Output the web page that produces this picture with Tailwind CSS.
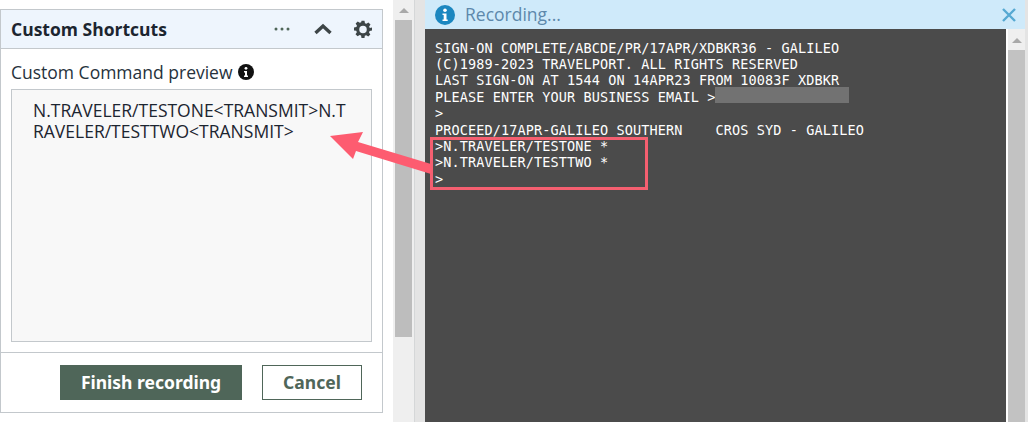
<!DOCTYPE html>
<html lang="en">
<head>
  <meta charset="UTF-8"/>
  <title>Custom Shortcuts - Recording</title>
  <script src="https://cdn.jsdelivr.net/npm/@tailwindcss/browser@4"></script>
</head>
<body class="w-[1028px] h-[422px] overflow-hidden bg-white relative font-['Open_Sans',sans-serif]">
  <div class="flex h-full">

    <!-- Left panel -->
    <div class="w-[393px] pt-[9px] shrink-0">
      <div class="w-[383px] h-[404px] border border-[#c3c8cc] flex flex-col">
        <div class="h-[39px] bg-[#eef5fd] border-b border-[#c3c8cc] flex items-center pl-[10px] pr-[10px] shrink-0">
          <span class="text-[17.500px] font-bold text-[#1c2530] flex-1">Custom Shortcuts</span>
          <svg width="16" height="4" viewBox="0 0 16 4" class="mr-[24px]"><circle cx="2" cy="2" r="1.500" fill="#4f6659"/><circle cx="8" cy="2" r="1.500" fill="#4f6659"/><circle cx="14" cy="2" r="1.500" fill="#4f6659"/></svg>
          <svg width="18" height="12" viewBox="0 0 18 12" class="mr-[22px]"><path d="M1.500 10 L9 3 L16.500 10" fill="none" stroke="#3d4547" stroke-width="3.400"/></svg>
          <svg width="18" height="18" viewBox="0 0 24 24" fill="#3d4547"><path fill-rule="evenodd" d="M10 1h4l.6 3.200 1.900.8 2.700-1.800 2.800 2.800-1.800 2.700.8 1.900L24 10v4l-3.200.6-.8 1.900 1.800 2.700-2.800 2.800-2.700-1.800-1.900.8L14 24h-4l-.6-3.200-1.900-.8-2.700 1.800-2.800-2.800 1.800-2.700-.8-1.900L0 14v-4l3.200-.6.8-1.900L2.200 4.800 5 2l2.700 1.800 1.900-.8zM12 7.500a5 5 0 1 0 0 10 5 5 0 0 0 0-10z"/></svg>
        </div>
        <div class="flex-1 flex flex-col px-[10px] min-h-0">
          <div class="flex items-center h-[20px] mt-[13px] text-[17.500px] text-[#26323c] shrink-0">
            Custom Command preview
            <svg width="16" height="16" viewBox="0 0 16 16" class="ml-[5px]"><circle cx="8" cy="8" r="8" fill="#111"/><circle cx="8" cy="4.300" r="1.400" fill="#fff"/><path d="M6 7h3v4.500h1V13H6v-1.500h1V8.500H6z" fill="#fff"/></svg>
          </div>
          <div class="mt-[7px] h-[253px] bg-[#f8f8f8] border border-[#c3c8cc] pl-[21px] pr-[18px] pt-[10px] text-[17.500px] leading-[21px] text-[#1c2530] break-all shrink-0">N.TRAVELER/TESTONE&lt;TRANSMIT&gt;N.TRAVELER/TESTTWO&lt;TRANSMIT&gt;</div>
        </div>
        <div class="h-[60px] border-t border-[#c3c8cc] flex items-center justify-end gap-[20px] pr-[20px] shrink-0 pb-[1px]">
          <button class="w-[182px] h-[35px] bg-[#4f6659] text-white text-[17.500px] font-bold font-['Noto_Sans',sans-serif]">Finish recording</button>
          <button class="w-[100px] h-[35px] bg-white border border-[#4f6659] text-[#4f6659] text-[17.500px] font-bold font-['Noto_Sans',sans-serif]">Cancel</button>
        </div>
      </div>
    </div>

    <!-- Page scrollbar -->
    <div class="w-[22px] bg-[#efefef] border-r border-[#d5d7d8] shrink-0 flex flex-col items-center pt-[8px]">
      <div class="w-0 h-0 border-l-[5px] border-r-[5px] border-b-[5px] border-l-transparent border-r-transparent border-b-[#a9a9a9]"></div>
      <div class="w-[17px] h-[317px] bg-[#bdbdbd] mt-[7px]"></div>
    </div>
    <div class="w-[10px] bg-[#e4e4e4] shrink-0"></div>

    <!-- Recording panel -->
    <div class="w-[600px] flex flex-col shrink-0">
      <div class="h-[29px] bg-[#cfeafa] flex items-center pl-[10px] pr-[9px] shrink-0">
        <svg width="20" height="20" viewBox="0 0 20 20"><circle cx="10" cy="10" r="10" fill="#1b87c0"/><circle cx="10" cy="5.200" r="1.800" fill="#fff"/><path d="M7.500 8.500h4v6h1.200V16H7.500v-1.500h1.200v-4.500H7.500z" fill="#fff"/></svg>
        <span class="ml-[10px] text-[17.500px] text-[#5d88ab] flex-1">Recording...</span>
        <svg width="14" height="14" viewBox="0 0 14 14"><path d="M1 1 L13 13 M13 1 L1 13" stroke="#56a9d2" stroke-width="2.400"/></svg>
      </div>
      <div class="flex-1 flex min-h-0">
        <div class="flex-1 bg-[#4b4b4b] pl-[10px] pt-[10.600px] text-[13.500px] leading-[16.400px] text-white font-['DejaVu_Sans_Mono',monospace] tracking-[0.12px]">
          <div class="whitespace-pre">SIGN-ON COMPLETE/ABCDE/PR/17APR/XDBKR36 - GALILEO</div>
          <div class="whitespace-pre">(C)1989-2023 TRAVELPORT. ALL RIGHTS RESERVED</div>
          <div class="whitespace-pre">LAST SIGN-ON AT 1544 ON 14APR23 FROM 10083F XDBKR</div>
          <div class="whitespace-pre flex">PLEASE ENTER YOUR BUSINESS EMAIL &gt;<span class="w-[134px] h-[16px] bg-[#727272] -mt-[2px] blur-[0.5px]"></span></div>
          <div class="whitespace-pre">&gt;</div>
          <div class="whitespace-pre">PROCEED/17APR-GALILEO SOUTHERN    CROS SYD - GALILEO</div>
          <div class="whitespace-pre">&gt;N.TRAVELER/TESTONE *</div>
          <div class="whitespace-pre">&gt;N.TRAVELER/TESTTWO *</div>
          <div class="whitespace-pre">&gt;</div>
        </div>
        <div class="w-[19px] bg-[#efefef] border-l-2 border-white shrink-0 flex flex-col items-center pt-[9px]">
          <div class="w-0 h-0 border-l-[5px] border-r-[5px] border-b-[5px] border-l-transparent border-r-transparent border-b-[#a9a9a9]"></div>
          <div class="w-[17px] flex-1 bg-[#c2c2c2] mt-[7px]"></div>
        </div>
      </div>
    </div>
    <div class="flex-1 bg-[#e4e4e4]"></div>
  </div>

  <!-- Annotation: red box and arrow over the screenshot -->
  <div class="absolute left-[430px] top-[137px] w-[218px] h-[53px] border-[3px] border-[#f55f70]"></div>
  <svg class="absolute left-0 top-0" width="1028" height="422" viewBox="0 0 1028 422">
    <path d="M330 136 L363 132 L358 142 L431 164 L431 174 L356 151 L353 159 Z" fill="#fd5c70"/>
  </svg>
</body>
</html>
